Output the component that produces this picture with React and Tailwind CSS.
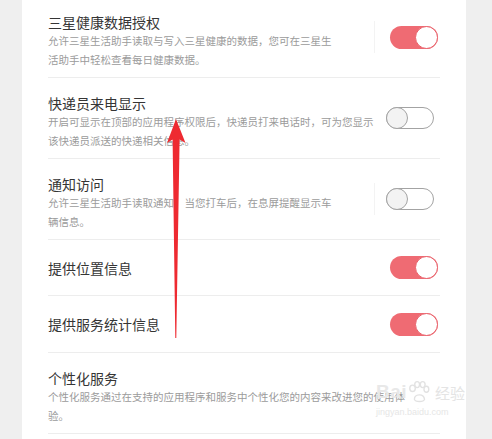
import React from 'react';

const font = { fontFamily: '"Noto Sans CJK SC", "Noto Sans", sans-serif' };

function Toggle({ on }) {
    if (on) {
        return (
            <div className="flex justify-end w-[48px] h-[23px] rounded-full bg-[#ef6b73] mr-[2px]">
                <div className="w-[23px] h-[23px] rounded-full bg-white border-[1.5px] border-[#e9606a]" />
            </div>
        );
    }
    return (
        <div className="flex items-center w-[48px] h-[22px] rounded-full bg-white border-[1.5px] border-[#a3a3a3] mr-[6px]">
            <div className="-ml-[1.5px] w-[22px] h-[22px] shrink-0 rounded-full bg-[#f3f3f3] border-[1.5px] border-[#a3a3a3]" />
        </div>
    );
}

function Row({ title, lines, on, divider, first }) {
    return (
        <div className={`flex items-start ${first ? 'pt-[13px]' : 'pt-4'} pb-2 border-b border-[#ededed]`}>
            <div className="flex-1 min-w-0">
                <div className="text-[14px] leading-[18px] text-[#353535]">{title}</div>
                <div className="text-[10.5px] leading-[19px] text-[#9b9b9b]">
                    {lines.map((l, i) => (
                        <div key={i} className="whitespace-nowrap">{l}</div>
                    ))}
                </div>
            </div>
            {on !== undefined && (
                <div className={`w-[66px] h-[32px] mt-[8px] flex items-center justify-end ${divider ? 'border-l border-[#f3f3f3]' : ''}`}>
                    <Toggle on={on} />
                </div>
            )}
        </div>
    );
}

function SimpleRow({ title, h }) {
    return (
        <div className={`flex items-center justify-between border-b border-[#ededed] ${h}`}>
            <div className="text-[14px] leading-[18px] text-[#353535]">{title}</div>
            <Toggle on />
        </div>
    );
}

export default function App() {
    return (
        <div className="relative w-[492px] h-[439px] overflow-hidden bg-[#efefef]" style={font}>
            <div className="ml-[22px] w-[444px] h-full bg-white px-[26px]">
                <Row
                    first
                    on
                    divider
                    title="三星健康数据授权"
                    lines={['允许三星生活助手读取与写入三星健康的数据，您可在三星生', '活助手中轻松查看每日健康数据。']}
                />
                <Row
                    on={false}
                    title="快递员来电显示"
                    lines={['开启可显示在顶部的应用程序权限后，快递员打来电话时，可为您显示', '该快递员派送的快递相关信息。']}
                />
                <Row
                    on={false}
                    divider
                    title="通知访问"
                    lines={['允许三星生活助手读取通知，当您打车后，在息屏提醒显示车', '辆信息。']}
                />
                <SimpleRow title="提供位置信息" h="h-[56px]" />
                <SimpleRow title="提供服务统计信息" h="h-[57px]" />
                <Row
                    title="个性化服务"
                    lines={['个性化服务通过在支持的应用程序和服务中个性化您的内容来改进您的使用体', '验。']}
                />
            </div>

            {/* red annotation arrow */}
            <svg className="absolute left-0 top-0 pointer-events-none" width="492" height="439">
                <polygon
                    points="176,119 185.5,143 179.6,139.5 176.3,338 175.3,338 172.6,139.5 167,143"
                    fill="#ee2a31"
                />
            </svg>

            {/* watermark */}
            <div className="absolute left-[376px] top-[380px] flex flex-col pointer-events-none">
                <div className="flex items-end">
                    <div className="text-[19px] leading-[20px] font-bold tracking-wide text-[#e8e8e8] mb-[2px]" style={{ fontFamily: '"Liberation Sans", sans-serif' }}>Bai</div>
                    <svg width="24" height="24" viewBox="0 0 26 24">
                        <g fill="none" stroke="#e2e2e2" strokeWidth="1.5">
                            <ellipse cx="6" cy="8" rx="3" ry="3.5" />
                            <ellipse cx="11" cy="4" rx="2.6" ry="3.2" />
                            <ellipse cx="17" cy="4" rx="2.6" ry="3.2" />
                            <ellipse cx="21" cy="9" rx="2.6" ry="3.2" />
                            <path d="M8 20 C8 14 18 13 19 20 C18 23 9 23 8 20 Z" />
                        </g>
                    </svg>
                    <div className="text-[15px] leading-[18px] text-[#e4e4e4] ml-[4px] mb-[2px]">经验</div>
                </div>
                <div className="text-[9px] leading-[12px] text-[#e6e6e6] mt-[2px]" style={{ fontFamily: '"Liberation Sans", sans-serif' }}>jingyan.baidu.com</div>
            </div>
        </div>
    );
}
